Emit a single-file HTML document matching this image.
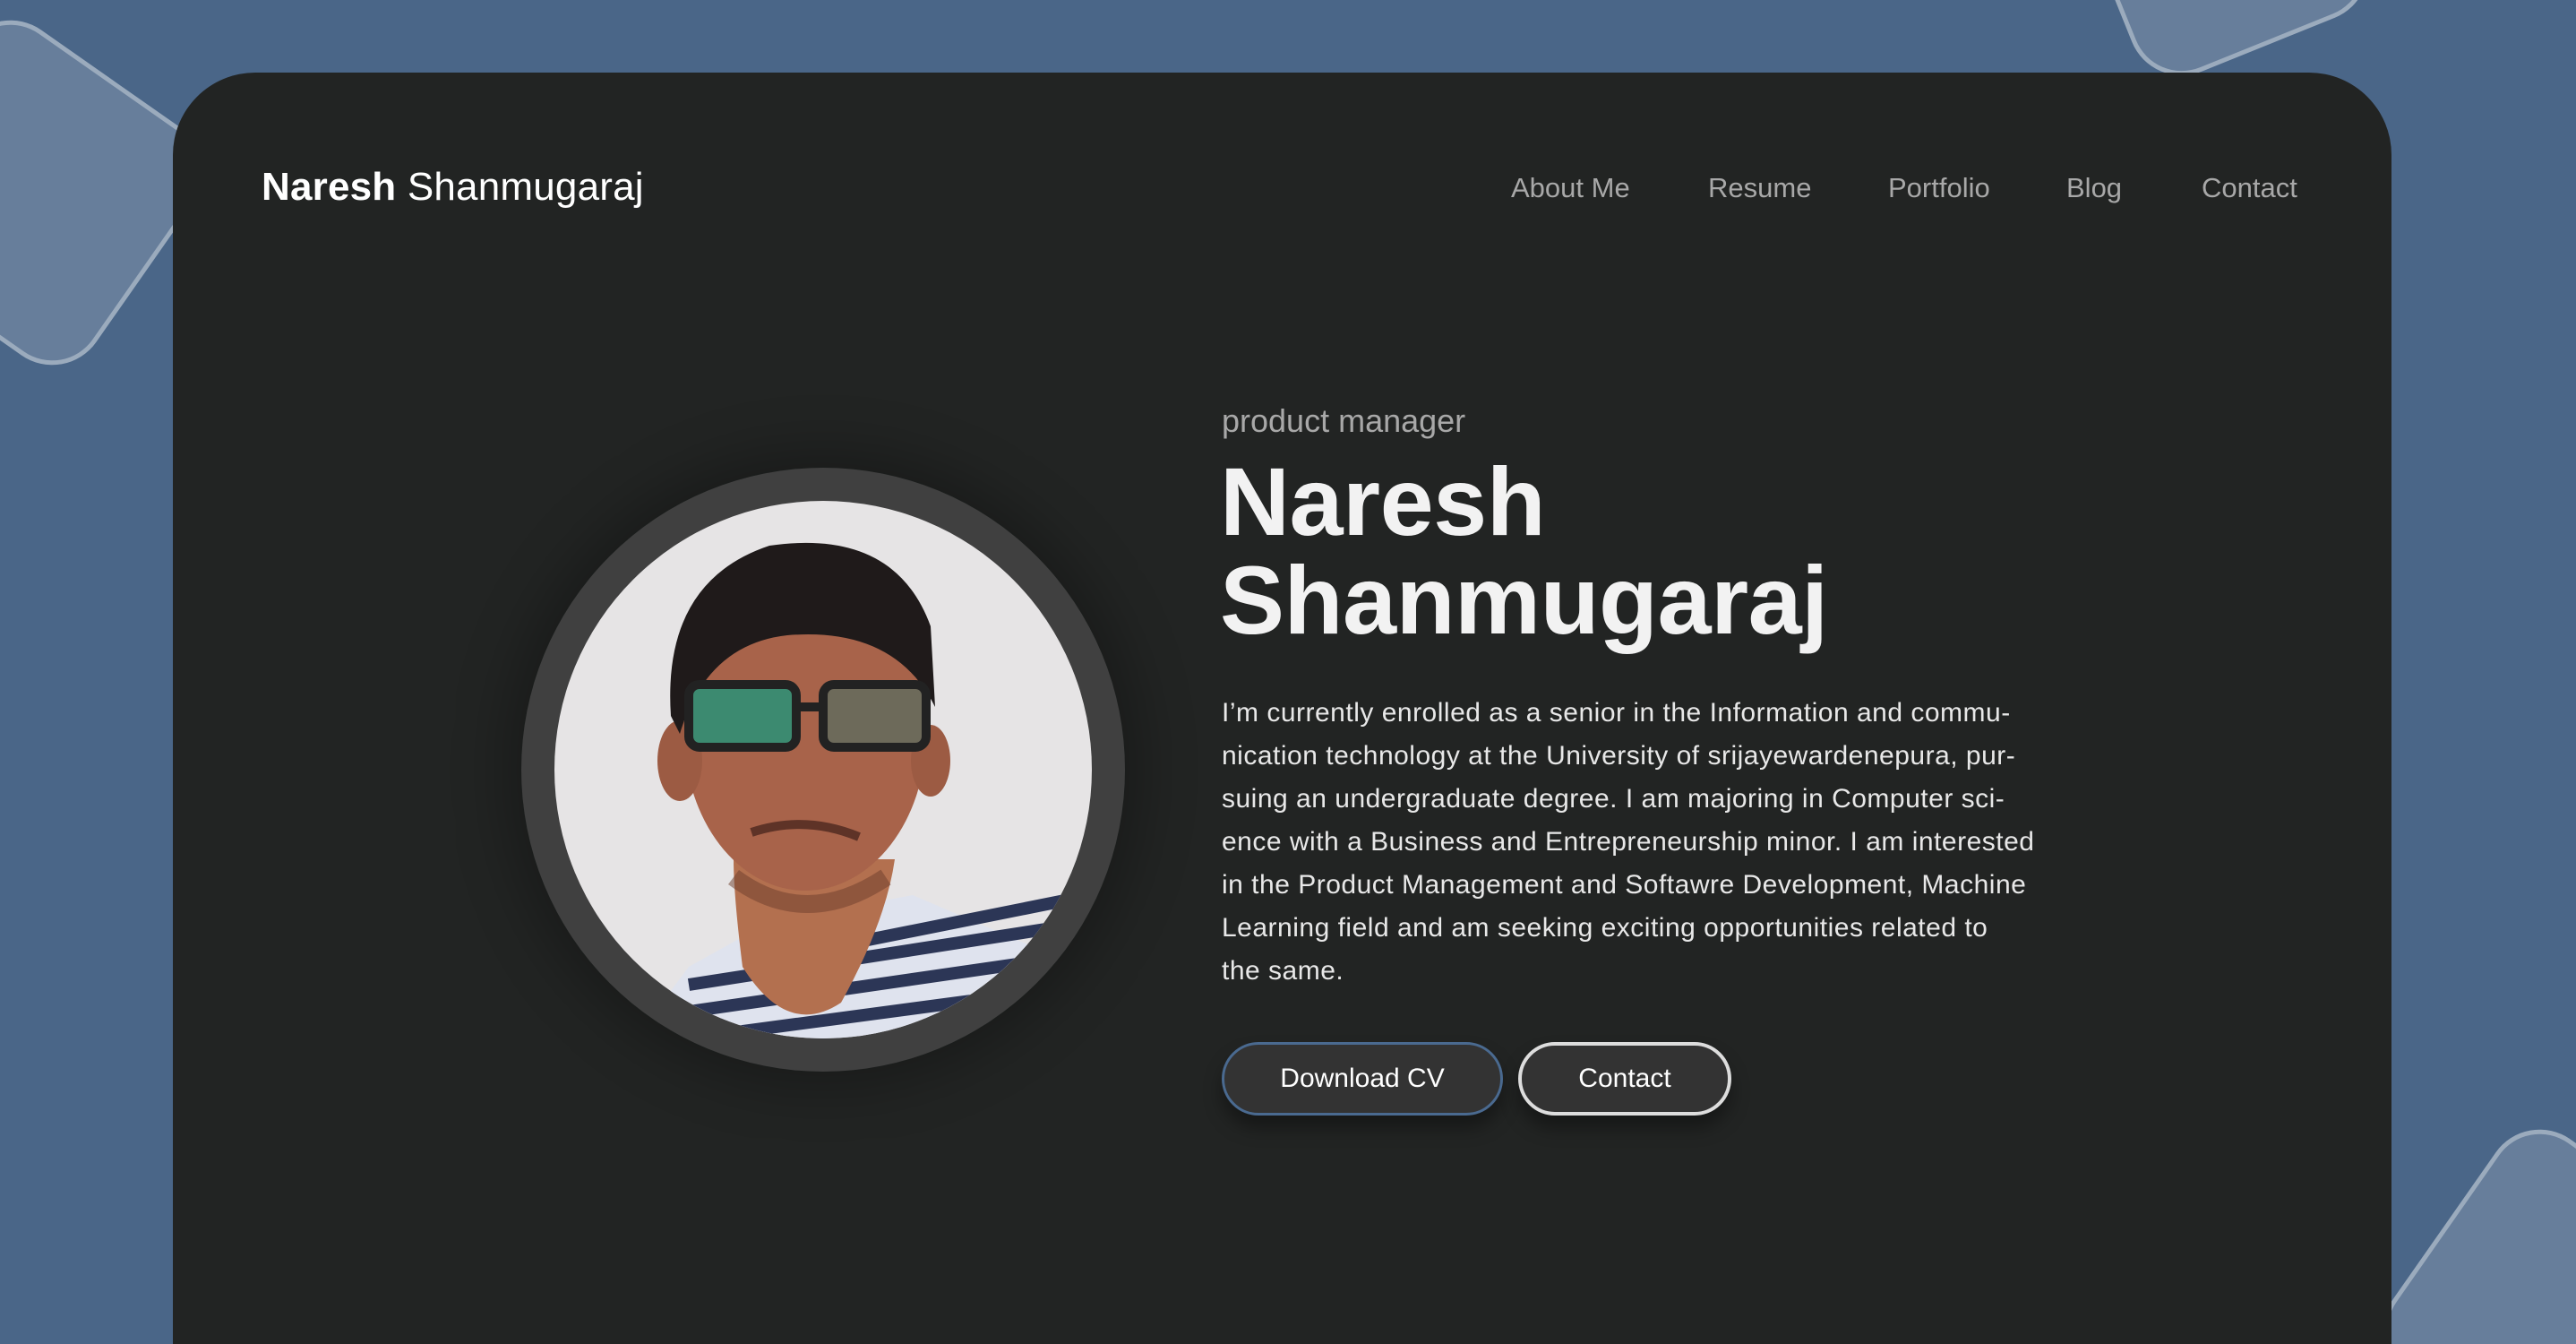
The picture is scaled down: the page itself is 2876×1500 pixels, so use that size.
<!DOCTYPE html>
<html><head><meta charset="utf-8"><style>
*{margin:0;padding:0;box-sizing:border-box}
html,body{width:2876px;height:1500px;overflow:hidden;background:#4a6688;font-family:"Liberation Sans",sans-serif}
#w{position:relative;width:2876px;height:1500px;overflow:hidden;contain:paint}
.deco{position:absolute;border-radius:60px;background:rgba(255,255,255,0.16);border:5px solid rgba(255,255,255,0.35)}
.card{position:absolute;left:193px;top:81px;width:2477px;height:1419px;background:#222423;border-radius:92px 92px 0 0}
.logo{position:absolute;left:292px;top:184px;font-size:44px;color:#fff;letter-spacing:0.2px}
.logo b{font-weight:700}
.nav{position:absolute;top:192px;font-size:31px;color:#a8a8a8}
.photo{position:absolute;left:582px;top:522px;width:674px;height:674px;border-radius:50%;background:#404040;box-shadow:0 0 60px 20px rgba(0,0,0,0.25)}
.photo svg{position:absolute;left:37px;top:37px}
.role{position:absolute;left:1364px;top:449px;font-size:36px;color:#a8a8a8}
.name{position:absolute;left:1362px;top:505px;font-size:108px;font-weight:700;color:#f2f2f2;line-height:110px;letter-spacing:-0.5px}
.para{position:absolute;left:1364px;top:772px;font-size:30px;line-height:48px;color:#e8e8e8;white-space:nowrap;letter-spacing:0.5px}
.btn{position:absolute;top:1163px;height:82px;border-radius:41px;background:#333;color:#fff;font-size:30px;display:flex;align-items:center;justify-content:center;box-shadow:0 14px 20px rgba(0,0,0,0.35)}
</style></head><body><div id="w">
<div class="deco" style="left:-120px;top:60px;width:310px;height:310px;transform:rotate(35deg)"></div>
<div class="deco" style="left:2340px;top:-220px;width:280px;height:280px;transform:rotate(-22deg)"></div>
<div class="deco" style="left:2700px;top:1300px;width:320px;height:320px;transform:rotate(35deg)"></div>
<div class="card"></div>
<div class="logo"><b>Naresh</b> Shanmugaraj</div>
<div class="nav" style="left:1687px">About Me</div>
<div class="nav" style="left:1907px">Resume</div>
<div class="nav" style="left:2108px">Portfolio</div>
<div class="nav" style="left:2307px">Blog</div>
<div class="nav" style="left:2458px">Contact</div>
<div class="photo"><svg width="600" height="600" viewBox="0 0 600 600">
<defs><clipPath id="c"><circle cx="300" cy="300" r="300"/></clipPath></defs>
<g clip-path="url(#c)">
<rect width="600" height="600" fill="#e6e4e5"/>
<path d="M90 600 L150 520 L240 470 L400 440 L540 500 L600 560 L600 600Z" fill="#dfe3ee"/>
<g stroke="#2c3656" stroke-width="14">
<line x1="150" y1="540" x2="600" y2="470"/><line x1="150" y1="570" x2="600" y2="505"/><line x1="150" y1="600" x2="600" y2="540"/><line x1="300" y1="500" x2="600" y2="440"/>
</g>
<path d="M210 520 Q200 440 200 400 L380 400 Q370 470 320 560 Q260 600 210 520Z" fill="#b3704f"/>
<ellipse cx="280" cy="260" rx="135" ry="175" fill="#a8634a"/>
<ellipse cx="140" cy="290" rx="25" ry="45" fill="#9c5b43"/>
<ellipse cx="420" cy="290" rx="22" ry="40" fill="#9c5b43"/>
<path d="M130 240 Q120 90 240 50 Q380 30 420 140 L425 230 Q380 140 260 150 Q170 160 140 260Z" fill="#1f1a1a"/>
<rect x="150" y="205" width="120" height="70" rx="12" fill="#3c8a70" stroke="#222" stroke-width="10"/>
<rect x="300" y="205" width="115" height="70" rx="12" fill="#6d6a5a" stroke="#222" stroke-width="10"/>
<path d="M270 230 L300 230" stroke="#222" stroke-width="10"/>
<path d="M220 370 Q280 350 340 375" stroke="#5e3327" stroke-width="10" fill="none"/>
<path d="M200 420 Q280 480 370 420" stroke="#6b3c2c" stroke-width="20" fill="none" opacity=".5"/>
</g></svg></div>
<div class="role">product manager</div>
<div class="name">Naresh<br>Shanmugaraj</div>
<div class="para">I’m currently enrolled as a senior in the Information and commu-<br>nication technology at the University of srijayewardenepura, pur-<br>suing an undergraduate degree. I am majoring in Computer sci-<br>ence with a Business and Entrepreneurship minor. I am interested<br>in the Product Management and Softawre Development, Machine<br>Learning field and am seeking exciting opportunities related to<br>the same.</div>
<div class="btn" style="left:1364px;width:314px;border:3px solid #4a6a90">Download CV</div>
<div class="btn" style="left:1695px;width:238px;border:4px solid #ddd">Contact</div>
</div></body></html>
